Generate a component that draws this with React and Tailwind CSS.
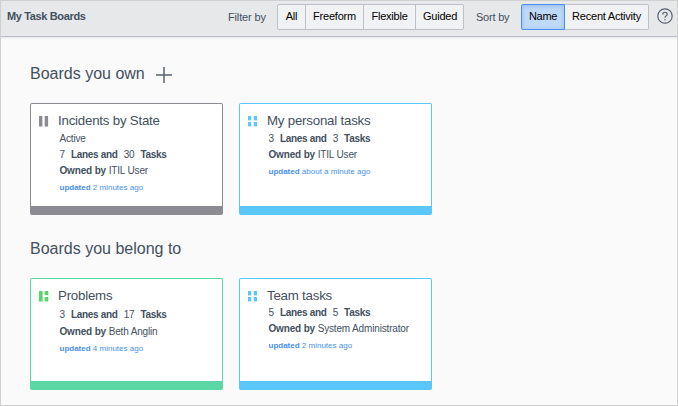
function BoardIcon({ kind, color }) {
  return (
    <svg width="10" height="11" viewBox="0 0 10 11" fill={color} className="mt-[12px] ml-[8px] shrink-0">
      {kind === 'freeform' && (
        <>
          <rect x="0" y="0" width="3.4" height="10.5" />
          <rect x="5.7" y="0" width="3.4" height="10.5" />
        </>
      )}
      {kind === 'guided' && (
        <>
          <rect x="0" y="0" width="3.6" height="10.5" />
          <rect x="5.7" y="0" width="3.6" height="4.2" />
          <rect x="5.7" y="6" width="3.6" height="4.5" />
        </>
      )}
      {kind === 'flexible' && (
        <>
          <rect x="0" y="0" width="3.2" height="4.4" />
          <rect x="5.8" y="0" width="3.2" height="4.4" />
          <rect x="0" y="6" width="3.2" height="4.4" />
          <rect x="5.8" y="6" width="3.2" height="4.4" />
        </>
      )}
    </svg>
  )
}

function BoardCard({ kind, color, frame, title, subtitle, lanes, tasks, owner, updated, bodyClass = '', ownerClass = '' }) {
  return (
    <article className={`flex h-[112px] w-[193px] flex-col rounded-[2px] border border-b-[9px] bg-white ${frame}`}>
      <div className="flex">
        <BoardIcon kind={kind} color={color} />
        <div className="ml-[9px] whitespace-nowrap">
          <h3 className="mt-[7px] h-[20px] text-[13.3px] leading-[20px] tracking-[-0.22px]">{title}</h3>
          <div className={`ml-[1.5px] text-[10px] leading-[16px] tracking-[-0.16px] ${bodyClass}`}>
            {subtitle && <p>{subtitle}</p>}
            <p className="flex">
              <span>{lanes}</span>
              <b className="ml-[6px] tracking-[-0.3px]">Lanes and</b>
              <span className="ml-[6px]">{tasks}</span>
              <b className="ml-[6px] tracking-[-0.3px]">Tasks</b>
            </p>
            <p className={ownerClass}><b>Owned by</b> {owner}</p>
            <p className="mt-px text-[8px] tracking-normal text-[#4990f0]"><b>updated</b> {updated}</p>
          </div>
        </div>
      </div>
    </article>
  )
}

export default function App() {
  const filters = [
    ['All', 'w-[28px]'],
    ['Freeform', 'w-[58px]'],
    ['Flexible', 'w-[52px]'],
    ['Guided', 'w-[48px]'],
  ]
  return (
    <div className="h-[406px] w-[678px] overflow-hidden border border-[#d0d0d1] bg-[#fafafa] font-['Liberation_Sans',Arial,sans-serif] text-[#43505e]">
      <header className="flex h-[36px] items-start border-b border-[#b9bec8] bg-[#e6e8ea] text-[11px] tracking-[-0.22px] shadow-[0_1px_2px_#e4e4e6]">
        <h1 className="mt-[7px] ml-[6px] w-[221px] leading-[16px] font-bold tracking-[-0.36px]">My Task Boards</h1>
        <span className="mt-[8px] w-[48px] leading-[16px] tracking-[-0.15px] whitespace-nowrap">Filter by</span>
        <div className="mt-[3px] ml-px flex h-[26px] w-[187px] rounded-[2px] border border-[#bdc0c6] bg-[#f1f2f4] text-black">
          {filters.map(([label, width], i) => (
            <button key={label} className={`${width} shrink-0 pb-px tracking-[-0.22px] ${i < 3 ? 'border-r border-[#bdc0c6]' : ''}`}>{label}</button>
          ))}
        </div>
        <span className="mt-[8px] ml-[12px] w-[45px] leading-[16px] whitespace-nowrap">Sort by</span>
        <div className="mt-[3px] flex h-[26px] text-black">
          <button className="w-[44px] rounded-l-[2px] border border-[#4a90f0] bg-[#bfd9f9] pb-px tracking-[-0.3px] shadow-[inset_0_1px_4px_#93b9e8]">Name</button>
          <button className="w-[84px] rounded-r-[2px] border border-l-0 border-[#bdc0c6] bg-[#f1f2f4] pb-px tracking-[-0.22px] whitespace-nowrap">Recent Activity</button>
        </div>
        <svg className="mt-[7px] ml-[8px] shrink-0" width="16" height="16" viewBox="0 0 16 16" fill="none" stroke="#566170" strokeWidth="1.2">
          <circle cx="8" cy="8" r="7.2" />
          <path d="M5.8 6.4C5.8 3.6 10.2 3.6 10.2 6.2C10.2 7.8 8 7.8 8 9.8M8 11v1.3" />
        </svg>
      </header>

      <main className="px-[29px]">
        <div className="flex h-[66px] pt-[25px]">
          <h2 className="w-[126px] text-[16px] leading-[24px] whitespace-nowrap">Boards you own</h2>
          <svg className="mt-[5px]" width="16" height="16" viewBox="0 0 16 16" stroke="#566170" strokeWidth="1.5" fill="none">
            <path d="M0 8h16M8 0v16" />
          </svg>
        </div>
        <div className="flex gap-[16px]">
          <BoardCard kind="freeform" color="#8c8b91" frame="border-[#8c8b91]" title="Incidents by State" subtitle="Active" lanes={7} tasks={30} owner="ITIL User" updated="2 minutes ago" />
          <BoardCard kind="flexible" color="#5ac6fa" frame="border-[#5ac6fa]" title="My personal tasks" lanes={3} tasks={3} owner="ITIL User" updated="about a minute ago" />
        </div>
        <h2 className="flex h-[63px] pt-[22px] text-[16px] leading-[24px]">Boards you belong to</h2>
        <div className="flex gap-[16px]">
          <BoardCard kind="guided" color="#53d769" frame="border-[#5ad7a4]" title="Problems" lanes={3} tasks={17} owner="Beth Anglin" updated="4 minutes ago" bodyClass="pt-px" ownerClass="mt-px" />
          <BoardCard kind="flexible" color="#5ac6fa" frame="border-[#5ac6fa]" title="Team tasks" lanes={5} tasks={5} owner="System Administrator" updated="2 minutes ago" bodyClass="-mt-px" />
        </div>
      </main>
    </div>
  )
}
